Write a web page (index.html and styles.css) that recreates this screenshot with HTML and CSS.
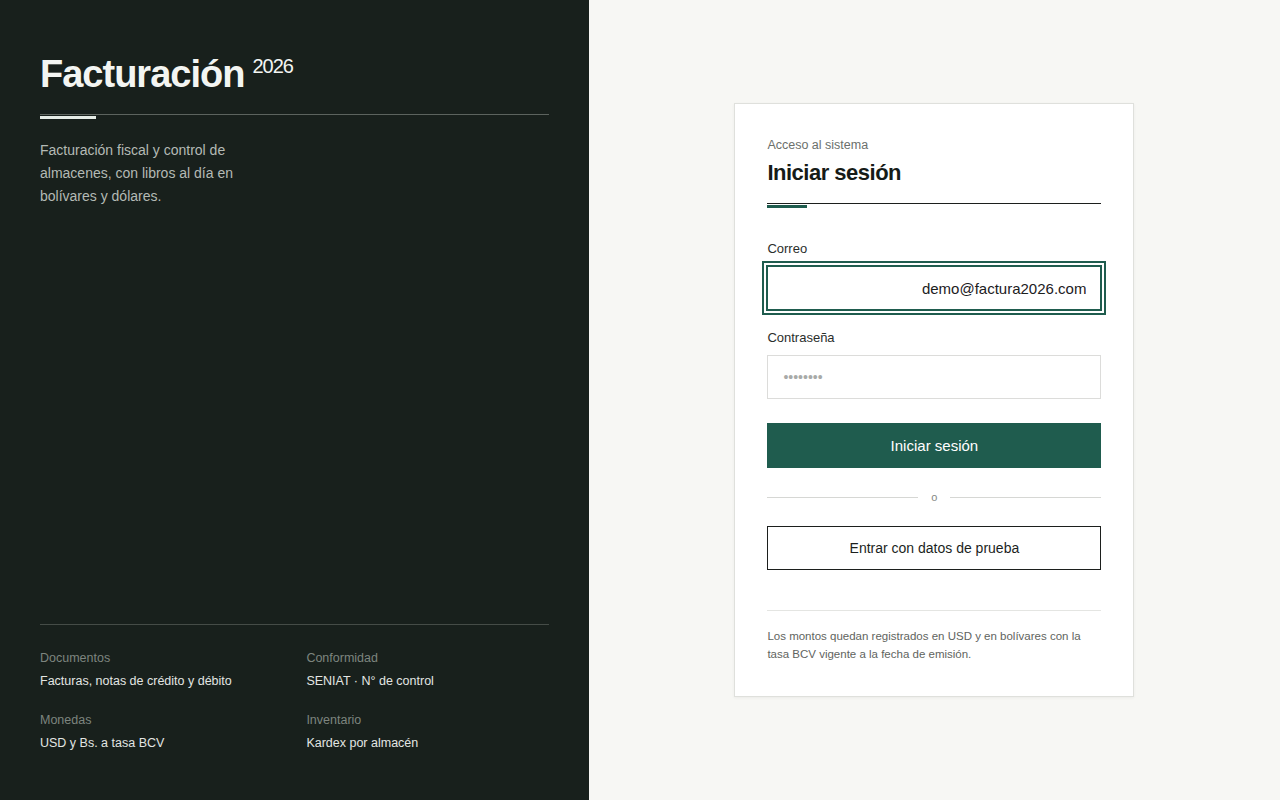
FILE: index.html
```html
<!DOCTYPE html>
<html lang="es">
<head>
    <meta charset="UTF-8">
    <meta name="viewport" content="width=device-width, initial-scale=1.0">
    <title>Facturación 2026 · Iniciar sesión</title>
    <link rel="stylesheet" href="styles.css">
</head>
<body>

    <div class="page">
        <aside class="brand">
            <div class="brand-top">
                <h1 class="brand-title">
                    <span class="brand-name">Facturación</span>
                    <span class="brand-year">2026</span>
                </h1>
                <div class="rule rule-light"><span></span></div>
                <p class="brand-text">Facturación fiscal y control de almacenes, con libros al día en bolívares y dólares.</p>
            </div>

            <div class="brand-facts">
                <div class="fact">
                    <span class="fact-label">Documentos</span>
                    <span class="fact-value">Facturas, notas de crédito y débito</span>
                </div>
                <div class="fact">
                    <span class="fact-label">Conformidad</span>
                    <span class="fact-value">SENIAT · N° de control</span>
                </div>
                <div class="fact">
                    <span class="fact-label">Monedas</span>
                    <span class="fact-value">USD y Bs. a tasa BCV</span>
                </div>
                <div class="fact">
                    <span class="fact-label">Inventario</span>
                    <span class="fact-value">Kardex por almacén</span>
                </div>
            </div>
        </aside>

        <main class="access">
            <form class="card" onsubmit="return false">
                <p class="eyebrow">Acceso al sistema</p>
                <h2 class="card-title">Iniciar sesión</h2>
                <div class="rule rule-dark"><span></span></div>

                <div class="field field-first">
                    <label for="email">Correo</label>
                    <input class="input input-email is-focused" id="email" type="email" value="demo@factura2026.com">
                </div>

                <div class="field">
                    <label for="password">Contraseña</label>
                    <input class="input" id="password" type="password" placeholder="••••••••">
                </div>

                <button class="btn btn-primary" type="submit">Iniciar sesión</button>

                <div class="divider"><span>o</span></div>

                <button class="btn btn-outline" type="button">Entrar con datos de prueba</button>

                <p class="note">Los montos quedan registrados en USD y en bolívares con la tasa BCV vigente a la fecha de emisión.</p>
            </form>
        </main>
    </div>

</body>
</html>
```

FILE: styles.css
```css
* {
    box-sizing: border-box;
}
body {
    font-family: "Liberation Sans", Arial, sans-serif;
    margin: 0;
    padding: 0;
    background-color: #f7f7f4;
    color: #1c201d;
}
.page {
    display: flex;
    height: 100vh;
}

/* left panel */
.brand {
    width: 46%;
    background: #18201c;
    color: #f3f5f2;
    padding: 54px 40px 47px;
    display: flex;
    flex-direction: column;
    justify-content: space-between;
}
.brand-title {
    display: flex;
    align-items: flex-start;
    gap: 8px;
    margin: 0;
    font-weight: normal;
}
.brand-name {
    font-size: 38px;
    line-height: 1.1;
    font-weight: bold;
    letter-spacing: -1px;
}
.brand-year {
    font-size: 20px;
    line-height: 20px;
    letter-spacing: -1px;
    margin-top: 2px;
}
.rule {
    border-top: 1px solid;
}
.rule span {
    display: block;
    height: 3px;
    margin-top: 1px;
}
.rule-light {
    margin-top: 18px;
    border-color: #5c635e;
}
.rule-light span {
    width: 56px;
    background: #e6ede7;
}
.brand-text {
    margin: 20px 0 0;
    max-width: 240px;
    font-size: 14px;
    line-height: 23px;
    color: #b4bab5;
}
.brand-facts {
    border-top: 1px solid #454c47;
    padding-top: 23px;
    display: grid;
    grid-template-columns: 1fr 1fr;
    column-gap: 24px;
    row-gap: 19px;
}
.fact {
    display: flex;
    flex-direction: column;
    gap: 3px;
    font-size: 12.5px;
    line-height: 20px;
}
.fact-label {
    color: #7d857f;
}
.fact-value {
    color: #e3e6e3;
}

/* login card */
.access {
    flex: 1;
    display: flex;
    align-items: center;
    justify-content: center;
}
.card {
    width: 400px;
    background: white;
    border: 1px solid #dfe0dc;
    box-shadow: 0 1px 3px rgba(0, 0, 0, 0.05);
    padding: 33px 32px;
    display: flex;
    flex-direction: column;
}
.eyebrow {
    margin: 0;
    font-size: 12.5px;
    line-height: 16px;
    color: #6b706c;
}
.card-title {
    margin: 7px 0 0;
    font-size: 22px;
    line-height: 26px;
    letter-spacing: -0.5px;
    color: #161b18;
}
.rule-dark {
    margin-top: 17px;
    border-color: #1c1f1d;
}
.rule-dark span {
    width: 40px;
    background: #1f5c4e;
}
.field {
    display: flex;
    flex-direction: column;
    margin-top: 20px;
}
.field-first {
    margin-top: 33px;
}
.field label {
    font-size: 13px;
    line-height: 16px;
    color: #2a2e2b;
    margin-bottom: 9px;
}
.input {
    height: 44px;
    border: 1px solid #dcdcda;
    border-radius: 0;
    padding: 0 15px;
    font-family: inherit;
    font-size: 14px;
    color: #1c201d;
    background: white;
    outline: none;
}
.input::placeholder {
    color: #a8aaa8;
}
.input-email {
    font-size: 15px;
    text-align: right;
    padding-right: 14px;
}
.input.is-focused {
    border-color: #1f5c4e;
    box-shadow: 0 0 0 1px #1f5c4e, 0 0 0 3px white, 0 0 0 5px #1f5c4e;
}
.btn {
    width: 100%;
    font-family: inherit;
    border-radius: 0;
    cursor: pointer;
}
.btn-primary {
    margin-top: 24px;
    height: 45px;
    border: none;
    background: #1f5c4e;
    color: white;
    font-size: 15px;
}
.divider {
    margin-top: 22px;
    display: flex;
    align-items: center;
    gap: 13px;
    font-size: 11px;
    line-height: 14px;
    color: #858885;
}
.divider::before,
.divider::after {
    content: "";
    flex: 1;
    height: 1px;
    background: #d6d7d4;
}
.btn-outline {
    margin-top: 22px;
    height: 44px;
    border: 1px solid #1c1f1d;
    background: white;
    color: #1c1f1d;
    font-size: 14px;
}
.note {
    margin: 40px 0 0;
    padding-top: 16px;
    border-top: 1px solid #e4e5e2;
    font-size: 11.5px;
    line-height: 18px;
    color: #5f6460;
}
```
